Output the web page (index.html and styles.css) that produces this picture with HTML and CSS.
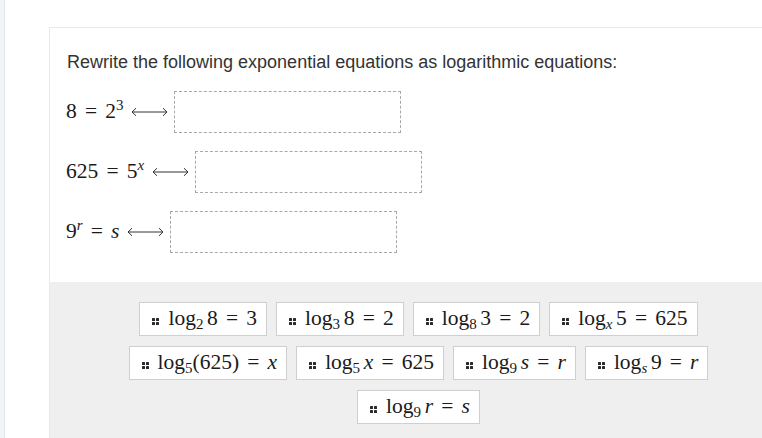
FILE: index.html
```html
<!DOCTYPE html>
<html>
<head>
<meta charset="utf-8">
<link rel="stylesheet" href="styles.css">
</head>
<body>
<div class="page">
  <div class="rail"></div>
  <div class="main">
    <div class="card">
      <div class="question">
        <p class="title">Rewrite the following exponential equations as logarithmic equations:</p>
        <div class="rows">
          <div class="row">
            <span class="m">8<span class="rel">=</span>2<sup>3</sup></span>
            <svg class="arrow" width="37" height="12" viewBox="0 0 37 12"><path d="M1 6H36M5 2.2L1 6L5 9.8M32 2.2L36 6L32 9.8" fill="none" stroke="#333" stroke-width="1"/></svg>
            <span class="drop"></span>
          </div>
          <div class="row">
            <span class="m">625<span class="rel">=</span>5<sup><i>x</i></sup></span>
            <svg class="arrow" width="37" height="12" viewBox="0 0 37 12"><path d="M1 6H36M5 2.2L1 6L5 9.8M32 2.2L36 6L32 9.8" fill="none" stroke="#333" stroke-width="1"/></svg>
            <span class="drop"></span>
          </div>
          <div class="row">
            <span class="m">9<sup><i>r</i></sup><span class="rel">=</span><i>s</i></span>
            <svg class="arrow" width="37" height="12" viewBox="0 0 37 12"><path d="M1 6H36M5 2.2L1 6L5 9.8M32 2.2L36 6L32 9.8" fill="none" stroke="#333" stroke-width="1"/></svg>
            <span class="drop"></span>
          </div>
        </div>
      </div>
      <div class="bank">
        <div class="chip"><span class="grip"><b></b><b></b><b></b><b></b></span><span class="m">log<sub>2</sub><span class="th"></span>8<span class="rel">=</span>3</span></div>
        <div class="chip"><span class="grip"><b></b><b></b><b></b><b></b></span><span class="m">log<sub>3</sub><span class="th"></span>8<span class="rel">=</span>2</span></div>
        <div class="chip"><span class="grip"><b></b><b></b><b></b><b></b></span><span class="m">log<sub>8</sub><span class="th"></span>3<span class="rel">=</span>2</span></div>
        <div class="chip"><span class="grip"><b></b><b></b><b></b><b></b></span><span class="m">log<sub><i>x</i></sub><span class="th"></span>5<span class="rel">=</span>625</span></div>
        <div class="chip"><span class="grip"><b></b><b></b><b></b><b></b></span><span class="m">log<sub>5</sub>(625)<span class="rel">=</span><i>x</i></span></div>
        <div class="chip"><span class="grip"><b></b><b></b><b></b><b></b></span><span class="m">log<sub>5</sub><span class="th"></span><i>x</i><span class="rel">=</span>625</span></div>
        <div class="chip"><span class="grip"><b></b><b></b><b></b><b></b></span><span class="m">log<sub>9</sub><span class="th"></span><i>s</i><span class="rel">=</span><i>r</i></span></div>
        <div class="chip"><span class="grip"><b></b><b></b><b></b><b></b></span><span class="m">log<sub><i>s</i></sub><span class="th"></span>9<span class="rel">=</span><i>r</i></span></div>
        <div class="chip"><span class="grip"><b></b><b></b><b></b><b></b></span><span class="m">log<sub>9</sub><span class="th"></span><i>r</i><span class="rel">=</span><i>s</i></span></div>
      </div>
    </div>
  </div>
</div>
</body>
</html>
```
FILE: styles.css
```css
html, body {
  margin: 0;
  padding: 0;
  background: #ffffff;
  overflow: hidden;
}
.page {
  display: flex;
  width: 762px;
  height: 438px;
  overflow: hidden;
}
.rail {
  flex: 0 0 4px;
  background: #f3f4f6;
  border-right: 1px solid #e2e6ec;
}
.main {
  flex: 0 0 auto;
  padding: 27px 0 0 44px;
}
.card {
  width: 737px;
  border-top: 1px solid #e8e8e8;
  border-left: 1px solid #e8e8e8;
  background: #fff;
}
.question {
  padding: 24px 0 29px 16px;
}
.title {
  margin: 0 0 0 1px;
  font-family: "Liberation Sans", Arial, sans-serif;
  font-size: 18px;
  line-height: 20px;
  color: #333;
}
.rows {
  display: flex;
  flex-direction: column;
  gap: 18px;
  margin-top: 19px;
}
.row {
  display: flex;
  align-items: center;
  height: 42px;
}
.m {
  font-family: "Liberation Serif", "Times New Roman", serif;
  font-size: 21.5px;
  color: #1a1a1a;
  white-space: nowrap;
  line-height: 1;
}
.m i {
  font-family: "Liberation Serif", "Times New Roman", serif;
  font-style: italic;
}
.m sup, .m sub {
  font-size: 0.7em;
  line-height: 0;
}
.m sup {
  vertical-align: 0.5em;
}
.m sub {
  vertical-align: -0.28em;
}
.rel {
  margin: 0 0.38em;
}
.th {
  display: inline-block;
  width: 0.17em;
}
.arrow {
  margin: 0 6px 0 8px;
  flex: 0 0 auto;
}
.drop {
  width: 225px;
  height: 40px;
  border: 1px dashed #a8a8a8;
  background: #fff;
}
.bank {
  background: #efefef;
  padding: 20px 60px 20px;
  display: flex;
  flex-wrap: wrap;
  justify-content: center;
  column-gap: 9px;
  row-gap: 10px;
}
.chip {
  display: flex;
  align-items: center;
  height: 32px;
  padding: 0 9px 0 12px;
  background: #fff;
  border: 1px solid #cfcfcf;
}
.grip {
  display: grid;
  grid-template-columns: 3px 3px;
  gap: 1px;
  margin: 4px 9px 0 0;
}
.grip b {
  display: block;
  width: 3px;
  height: 3px;
  background: #2a2a2a;
  border-radius: 0.5px;
}
```
